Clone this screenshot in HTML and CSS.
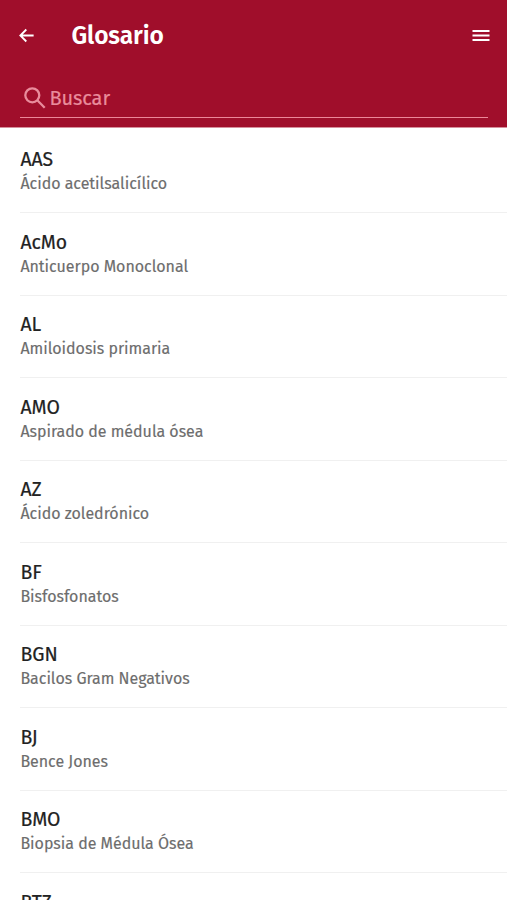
FILE: index.html
```html
<!DOCTYPE html>
<html lang="es">
<head>
<meta charset="utf-8">
<meta name="viewport" content="width=device-width, initial-scale=1">
<title>Glosario</title>
<link rel="stylesheet" href="styles.css">
</head>
<body>
<header class="header">
  <div class="toolbar">
    <svg class="back" viewBox="0 0 16 16" aria-hidden="true"><path d="M15.6 8H1.8M7.8 1.6 1.4 8l6.4 6.4"/></svg>
    <h1 class="heading">Glosario</h1>
    <svg class="menu" viewBox="0 0 18 13" aria-hidden="true"><path d="M.5 2h17M.5 6.5h17M.5 11h17"/></svg>
  </div>
  <div class="search">
    <svg class="lens" viewBox="0 0 22 22" aria-hidden="true"><circle cx="8.3" cy="8.3" r="7"/><path d="m13.3 13.3 7.4 7.4"/></svg>
    <span class="hint">Buscar</span>
  </div>
</header>
<main class="list">
  <section class="item"><h2 class="term">AAS</h2><p class="meaning">Ácido acetilsalicílico</p></section>
  <section class="item"><h2 class="term">AcMo</h2><p class="meaning">Anticuerpo Monoclonal</p></section>
  <section class="item"><h2 class="term">AL</h2><p class="meaning">Amiloidosis primaria</p></section>
  <section class="item"><h2 class="term">AMO</h2><p class="meaning">Aspirado de médula ósea</p></section>
  <section class="item"><h2 class="term">AZ</h2><p class="meaning">Ácido zoledrónico</p></section>
  <section class="item"><h2 class="term">BF</h2><p class="meaning">Bisfosfonatos</p></section>
  <section class="item"><h2 class="term">BGN</h2><p class="meaning">Bacilos Gram Negativos</p></section>
  <section class="item"><h2 class="term">BJ</h2><p class="meaning">Bence Jones</p></section>
  <section class="item"><h2 class="term">BMO</h2><p class="meaning">Biopsia de Médula Ósea</p></section>
  <section class="item"><h2 class="term">BTZ</h2></section>
</main>
</body>
</html>
```
FILE: styles.css
```css
* { box-sizing: border-box; margin: 0; padding: 0; }
body {
  height: 900px;
  overflow: hidden;
  background: #fff;
  font-family: "Fira Sans", "Noto Sans", sans-serif;
}
svg { display: block; flex: none; fill: none; stroke: currentColor; }
.header { height: 128px; background: #a00e2b; color: #fff; border-bottom: 1px solid #d58f9c; }
.toolbar { display: flex; align-items: center; height: 70px; padding: 0 17px 0 19px; }
.back { width: 15px; height: 15px; stroke-width: 1.9; }
.heading { flex: 1; margin-left: 37.5px; padding-top: 1px; font-size: 24.5px; line-height: 30px; font-weight: 600; letter-spacing: -0.1px; }
.menu { width: 18px; height: 13px; stroke-width: 2; }
.search {
  display: flex;
  align-items: center;
  height: 48px;
  margin: 0 19px 0 20px;
  padding: 8px 0 0 3.5px;
  border-bottom: 1px solid #ec8799;
  color: #e98c9c;
}
.lens { width: 22px; height: 22px; stroke-width: 2.3; }
.hint { margin-left: 4px; font-size: 20px; line-height: 24px; letter-spacing: -0.1px; -webkit-text-stroke: 0.2px; }
.list { padding-top: 2.5px; }
.item { height: 82.5px; margin-left: 20px; padding: 17.5px 0 0 0.4px; border-bottom: 1px solid #f0f0f0; }
.term { color: #222; font-size: 19.4px; line-height: 24px; font-weight: 400; -webkit-text-stroke: 0.2px; }
.meaning { color: #6d6d6d; font-size: 16px; line-height: 24px; letter-spacing: -0.03px; -webkit-text-stroke: 0.15px; }
```
